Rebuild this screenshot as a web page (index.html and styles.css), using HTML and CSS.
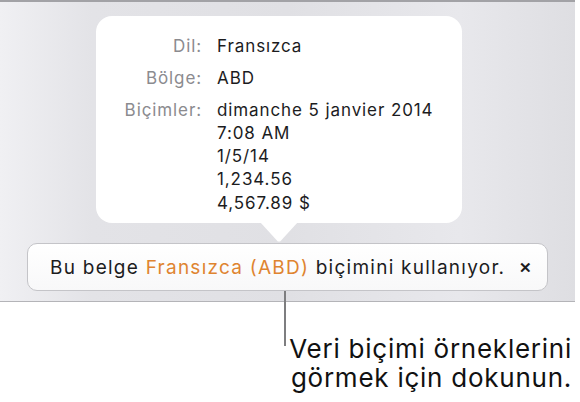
FILE: index.html
```html
<!DOCTYPE html>
<html>
<head>
<meta charset="utf-8">
<link rel="stylesheet" href="styles.css">
</head>
<body>
<div class="page">
  <div class="panel">
    <div class="popover">
      <div class="grid">
        <div class="label">Dil:</div>
        <div class="value">Fransızca</div>
        <div class="label">Bölge:</div>
        <div class="value">ABD</div>
        <div class="label">Biçimler:</div>
        <div class="value">dimanche 5 janvier 2014<br>7:08 AM<br>1/5/14<br>1,234.56<br>4,567.89 $</div>
      </div>
      <div class="arrow"></div>
    </div>
    <div class="banner">
      <span class="msg">Bu belge <span class="accent">Fransızca (ABD)</span> biçimini kullanıyor.</span>
      <span class="close">✕</span>
    </div>
  </div>
  <div class="callout">
    <div class="line"></div>
    <div class="note">Veri biçimi örneklerini<br>görmek için dokunun.</div>
  </div>
</div>
</body>
</html>
```
FILE: styles.css
```css
* { box-sizing: border-box; }
html, body { margin: 0; padding: 0; background: #fff; }
body { width: 580px; height: 402px; overflow: hidden; font-family: "Inter", "Roboto", sans-serif; color: #1c1c1e; }
.page { width: 580px; height: 402px; }
.panel {
  width: 575px;
  height: 302px;
  border-top: 2px solid #a2a2a6;
  border-bottom: 1px solid #b4b4b8;
  background: linear-gradient(90deg, #f0f0f3 0%, #e3e3e7 16%, #e0e0e4 50%, #e8e8ec 80%, #dedee2 100%);
  display: flex;
  flex-direction: column;
}
.popover {
  position: relative;
  margin: 14px 0 0 96px;
  width: 366px;
  height: 207px;
  background: #fff;
  border-radius: 16px;
  padding: 19px 0 0 0;
}
.grid {
  display: grid;
  grid-template-columns: 106px auto;
  column-gap: 15px;
  row-gap: 8.5px;
  font-size: 17px;
  letter-spacing: 0.9px;
  line-height: 23.3px;
}
.label { text-align: right; color: #8b8b8f; }
.value { color: #1c1c1e; }
.arrow {
  position: absolute;
  left: 164px;
  bottom: -19px;
  width: 38px;
  height: 20px;
  background: #fff;
  clip-path: polygon(0 0, 100% 0, 53% 98%, 47% 98%);
}
.banner {
  margin: 20px 0 0 27px;
  width: 521px;
  height: 48px;
  border: 1px solid #c4c4c8;
  border-radius: 10px;
  background: linear-gradient(180deg, #ffffff 0%, #f8f8f9 100%);
  display: flex;
  align-items: center;
  padding: 0 15px 0 22px;
  font-size: 19px;
  letter-spacing: 1.25px;
  justify-content: space-between;
}
.accent { color: #df8430; }
.close { font-size: 15px; font-weight: 800; color: #1c1c1e; letter-spacing: 0; }
.callout {
  position: relative;
  height: 100px;
}
.line {
  position: absolute;
  left: 284px;
  top: -11px;
  width: 2px;
  height: 55px;
  background: #7e7e80;
}
.note {
  position: absolute;
  right: 8px;
  top: 32px;
  text-align: right;
  font-size: 26px;
  letter-spacing: 0.75px;
  line-height: 29px;
  color: #111;
}
```
